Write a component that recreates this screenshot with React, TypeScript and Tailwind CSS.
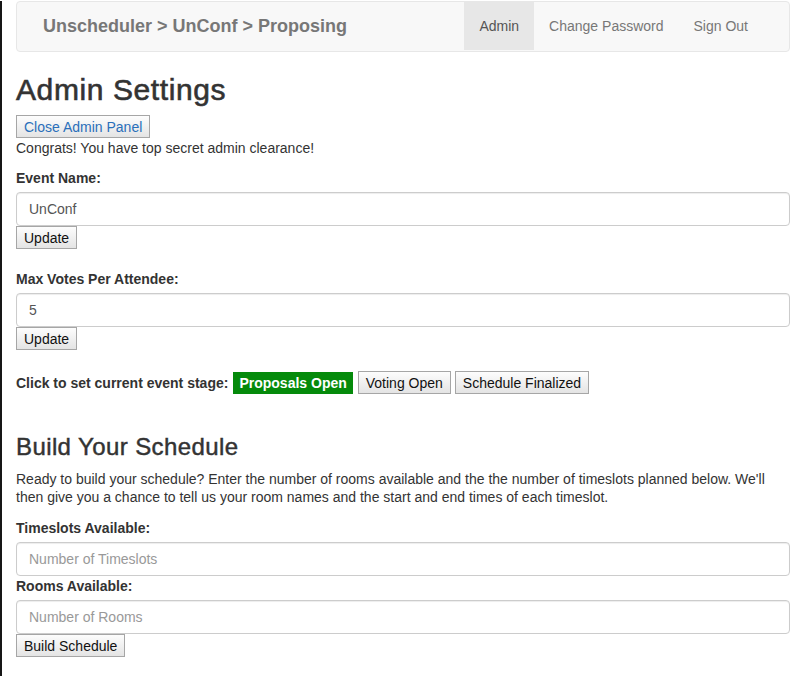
import React from "react";

const btn =
  "border border-[#a6a6a6] bg-linear-to-b from-[#fdfdfd] to-[#e4e4e4] px-[7px] h-[23px] text-[14px] leading-[20px] text-[#111]";
const input =
  "block w-full h-[34px] border border-[#ccc] rounded-[4px] px-[12px] text-[14px] text-[#555] placeholder:text-[#999] shadow-[inset_0_1px_1px_rgba(0,0,0,0.075)] outline-none";
const label = "block font-bold mb-[4px]";

export default function App() {
  return (
    <div className="min-h-screen bg-white border-l-2 border-[#161616] pl-[14px] pr-[14px] font-['Liberation_Sans',Arial,sans-serif] text-[14px] leading-[20px] text-[#333]">
      {/* navbar */}
      <nav className="mt-px h-[51px] border border-[#e7e7e7] bg-[#f8f8f8] rounded-[4px] flex items-stretch justify-between">
        <div className="pl-[26px] pb-px flex items-center text-[18px] font-bold text-[#777]">
          Unscheduler &gt; UnConf &gt; Proposing
        </div>
        <ul className="flex items-stretch pr-[26px] pb-px text-[#777]">
          <li className="px-[15px] flex items-center bg-[#e7e7e7] text-[#555]">Admin</li>
          <li className="px-[15px] flex items-center">Change Password</li>
          <li className="px-[15px] flex items-center">Sign Out</li>
        </ul>
      </nav>

      <h2 className="mt-[21px] mb-[9px] text-[30px] leading-[33px] tracking-[0.6px] [-webkit-text-stroke:0.6px_#333]">
        Admin Settings
      </h2>
      <button className={btn + " !text-[#2a6fba]"}>Close Admin Panel</button>
      <p className="mb-[10px]">Congrats! You have top secret admin clearance!</p>

      <label className={label}>Event Name:</label>
      <input className={input} defaultValue="UnConf" />
      <button className={btn}>Update</button>

      <label className={label + " mt-[20px]"}>Max Votes Per Attendee:</label>
      <input className={input} defaultValue="5" />
      <button className={btn}>Update</button>

      <div className="mt-[21px] flex items-center">
        <span className="font-bold">Click to set current event stage:</span>
        <button className="ml-[5px] h-[22px] px-[5px] border border-[#058a0b] bg-[#058a0b] text-white font-bold">
          Proposals Open
        </button>
        <button className={btn + " ml-[5px]"}>Voting Open</button>
        <button className={btn + " ml-[4px]"}>Schedule Finalized</button>
      </div>

      <h3 className="mt-[40px] mb-[10px] text-[24px] leading-[26px] tracking-[0.4px] [-webkit-text-stroke:0.45px_#333]">
        Build Your Schedule
      </h3>
      <p className="mb-[12px] leading-[18px]">
        Ready to build your schedule? Enter the number of rooms available and the the number of timeslots planned below. We'll then give you a chance to tell us your room names and the start and end times of each timeslot.
      </p>

      <label className={label}>Timeslots Available:</label>
      <input className={input} placeholder="Number of Timeslots" />
      <label className={label}>Rooms Available:</label>
      <input className={input} placeholder="Number of Rooms" />
      <button className={btn}>Build Schedule</button>
    </div>
  );
}
